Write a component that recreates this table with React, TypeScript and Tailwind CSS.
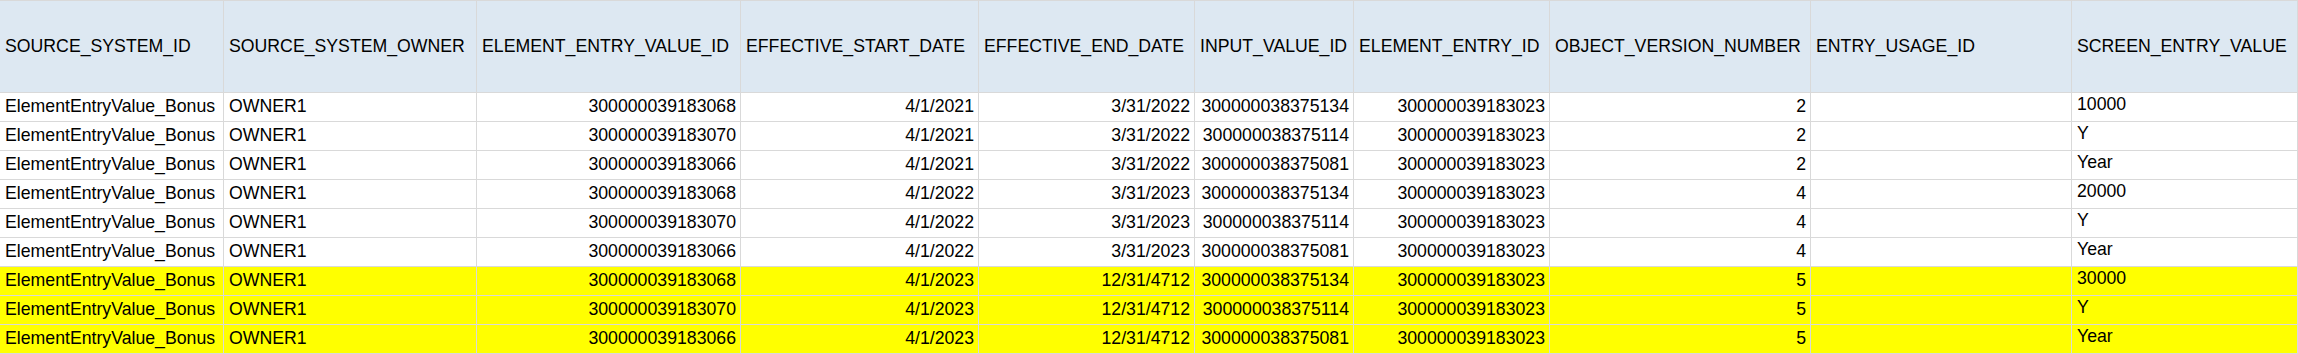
const headers = [
  'SOURCE_SYSTEM_ID',
  'SOURCE_SYSTEM_OWNER',
  'ELEMENT_ENTRY_VALUE_ID',
  'EFFECTIVE_START_DATE',
  'EFFECTIVE_END_DATE',
  'INPUT_VALUE_ID',
  'ELEMENT_ENTRY_ID',
  'OBJECT_VERSION_NUMBER',
  'ENTRY_USAGE_ID',
  'SCREEN_ENTRY_VALUE',
];

// right-aligned columns
const right = [false, false, true, true, true, true, true, true, true, false];

const rows = [
  ['300000039183068', '4/1/2021', '3/31/2022', '300000038375134', '2', '10000', false],
  ['300000039183070', '4/1/2021', '3/31/2022', '300000038375114', '2', 'Y', false],
  ['300000039183066', '4/1/2021', '3/31/2022', '300000038375081', '2', 'Year', false],
  ['300000039183068', '4/1/2022', '3/31/2023', '300000038375134', '4', '20000', false],
  ['300000039183070', '4/1/2022', '3/31/2023', '300000038375114', '4', 'Y', false],
  ['300000039183066', '4/1/2022', '3/31/2023', '300000038375081', '4', 'Year', false],
  ['300000039183068', '4/1/2023', '12/31/4712', '300000038375134', '5', '30000', true],
  ['300000039183070', '4/1/2023', '12/31/4712', '300000038375114', '5', 'Y', true],
  ['300000039183066', '4/1/2023', '12/31/4712', '300000038375081', '5', 'Year', true],
] as const;

export default function App() {
  return (
    <div className="w-[2298px] h-[354px] overflow-hidden bg-white text-black text-[17.7px] leading-none" style={{ fontFamily: '"Liberation Sans", Arial, sans-serif' }}>
      <div className="grid grid-cols-[224px_253px_264px_238px_216px_159px_196px_261px_261px_226px] border-t border-[#d9d9d9]">
        {headers.map((h) => (
          <div key={h} className="h-[92px] flex items-center px-[5px] bg-[#dde8f2] border-r border-b border-[#d9d9d9] whitespace-nowrap">
            {h}
          </div>
        ))}
        {rows.map((r, ri) => {
          const cells = ['ElementEntryValue_Bonus', 'OWNER1', r[0], r[1], r[2], r[3], '300000039183023', r[4], '', r[5]];
          const bg = r[6] ? 'bg-[#ffff00]' : 'bg-white';
          return cells.map((c, ci) => (
            <div
              key={ri + '-' + ci}
              className={`h-[29px] flex items-center border-r border-b border-[#d9d9d9] whitespace-nowrap ${bg} ${right[ci] ? 'justify-end pr-[4px]' : 'pl-[5px]'} ${ci === 9 ? 'pb-[4px]' : ''}`}
            >
              {c}
            </div>
          ));
        })}
      </div>
    </div>
  );
}
